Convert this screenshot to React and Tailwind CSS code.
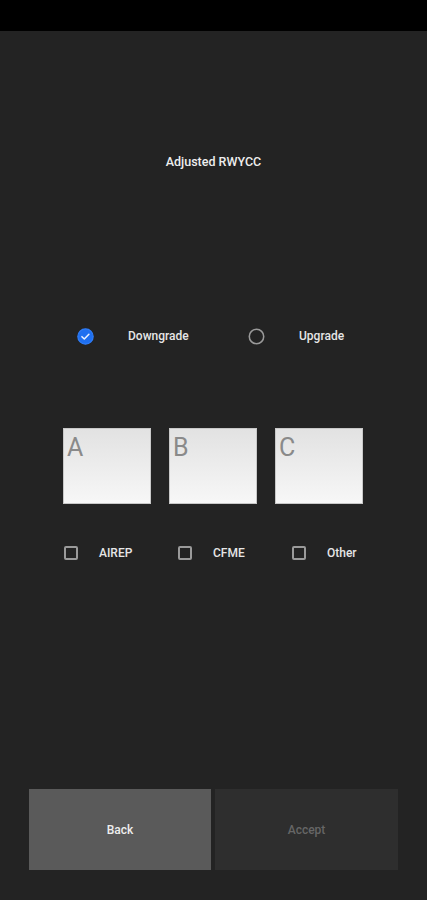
import React, { useState } from 'react';

const font = { fontFamily: 'Roboto, "Liberation Sans", sans-serif' };

function Radio({ checked }) {
  if (checked) {
    return (
      <svg width="17" height="17" viewBox="0 0 20 20">
        <circle cx="10" cy="10" r="9" fill="#1e6ff0" stroke="#2f7cf6" strokeWidth="1.5" />
        <path d="M5.8 10.2l2.8 2.8 5.4-5.6" fill="none" stroke="#e8f0ff" strokeWidth="1.8" strokeLinecap="round" strokeLinejoin="round" />
      </svg>
    );
  }
  return (
    <svg width="17" height="17" viewBox="0 0 20 20">
      <circle cx="10" cy="10" r="8.5" fill="none" stroke="#9a9a9a" strokeWidth="1.8" />
    </svg>
  );
}

function Box({ letter }) {
  return (
    <div className="w-[88px] h-[76px] bg-gradient-to-b from-[#e2e2e2] to-[#f7f7f7] border border-[#c8c8c8] pl-[3px] pt-[6px]">
      <span className="text-[25px] leading-none text-[#8a8a8a]" style={font}>{letter}</span>
    </div>
  );
}

function Check({ label, width }) {
  return (
    <div className={`flex items-center ${width}`}>
      <div className="w-[14px] h-[14px] border-2 border-[#9a9a9a] rounded-[2px] ml-[1px]" />
      <span className="ml-[21px] text-[12px] font-medium text-[#e6e6e6]">{label}</span>
    </div>
  );
}

export default function App() {
  const [mode, setMode] = useState('down');

  return (
    <div className="w-[427px] h-[900px] bg-[#232323] flex flex-col" style={font}>
      <div className="h-[31px] bg-black shrink-0" />

      <div className="pt-[123px] text-center text-[12.5px] font-medium text-[#eeeeee] leading-[16px]">
        Adjusted RWYCC
      </div>

      <div className="mt-[157px] flex items-center pl-[77px]">
        <button onClick={() => setMode('down')} className="flex items-center w-[171px]">
          <Radio checked={mode === 'down'} />
          <span className="ml-[34px] text-[12px] font-medium text-[#e6e6e6]">Downgrade</span>
        </button>
        <button onClick={() => setMode('up')} className="flex items-center">
          <Radio checked={mode === 'up'} />
          <span className="ml-[34px] text-[12px] font-medium text-[#e6e6e6]">Upgrade</span>
        </button>
      </div>

      <div className="mt-[83px] flex gap-[18px] pl-[63px]">
        <Box letter="A" />
        <Box letter="B" />
        <Box letter="C" />
      </div>

      <div className="mt-[40px] flex items-center pl-[63px]">
        <Check label="AIREP" width="w-[114px]" />
        <Check label="CFME" width="w-[114px]" />
        <Check label="Other" width="" />
      </div>

      <div className="flex-1" />

      <div className="flex gap-[4px] px-[29px] pb-[30px]">
        <button className="w-[182px] h-[81px] bg-[#5a5a5a] text-[12px] text-[#eeeeee] font-medium">Back</button>
        <button className="w-[183px] h-[81px] bg-[#2e2e2e] text-[12px] text-[#666666] font-medium">Accept</button>
      </div>
    </div>
  );
}
